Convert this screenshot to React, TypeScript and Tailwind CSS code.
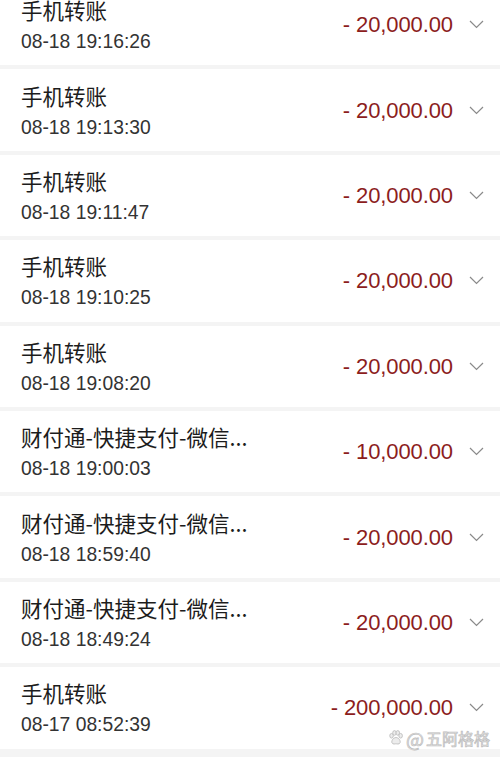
import React from "react";

const rows = [
  { t: "手机转账", d: "08-18 19:16:26", a: "- 20,000.00" },
  { t: "手机转账", d: "08-18 19:13:30", a: "- 20,000.00" },
  { t: "手机转账", d: "08-18 19:11:47", a: "- 20,000.00" },
  { t: "手机转账", d: "08-18 19:10:25", a: "- 20,000.00" },
  { t: "手机转账", d: "08-18 19:08:20", a: "- 20,000.00" },
  { t: "财付通-快捷支付-微信...", d: "08-18 19:00:03", a: "- 10,000.00" },
  { t: "财付通-快捷支付-微信...", d: "08-18 18:59:40", a: "- 20,000.00" },
  { t: "财付通-快捷支付-微信...", d: "08-18 18:49:24", a: "- 20,000.00" },
  { t: "手机转账", d: "08-17 08:52:39", a: "- 200,000.00" },
];

function Chevron() {
  return (
    <svg width="15" height="9" viewBox="0 0 15 9" className="shrink-0">
      <polyline points="1,1 7.5,7.5 14,1" fill="none" stroke="#8a8a8a" strokeWidth="1.2" />
    </svg>
  );
}

function Paw() {
  return (
    <svg width="16" height="16" viewBox="0 0 18 18" className="shrink-0">
      <g fill="#ececec" stroke="#bdbdbd" strokeWidth="1">
        <ellipse cx="4" cy="6.5" rx="2" ry="2.6" />
        <ellipse cx="7.3" cy="3.3" rx="2" ry="2.6" />
        <ellipse cx="11" cy="3.3" rx="2" ry="2.6" />
        <ellipse cx="14.2" cy="6.5" rx="2" ry="2.6" />
        <path d="M9 8.5 C6 8.5 3.5 12 4.5 14.5 C5.5 16.5 8 15.5 9 15.5 C10 15.5 12.5 16.5 13.5 14.5 C14.5 12 12 8.5 9 8.5 Z" />
      </g>
    </svg>
  );
}

export default function App() {
  return (
    <div
      className="relative w-[500px] h-[757px] overflow-hidden bg-[#f4f4f4]"
      style={{ fontFamily: '"Liberation Sans", "Noto Sans CJK SC", sans-serif' }}
    >
      <div className="flex flex-col gap-[4px] -mt-[16px]">
        {rows.map((r, i) => (
          <div key={i} className="h-[81.4px] bg-white flex items-center pl-[21px] pr-[16px] shrink-0">
            <div className="flex-1 flex flex-col">
              <div className="text-[21.5px] leading-[24px] text-[#1c1c1c] mt-[2px]" style={{ fontFamily: '"Noto Sans CJK SC", sans-serif' }}>
                {r.t}
              </div>
              <div className="text-[19.3px] leading-[22px] text-[#333] mt-[9px]">{r.d}</div>
            </div>
            <div className="text-[22px] text-[#8c1d1d] mr-[16px] tracking-[-0.1px]">{r.a}</div>
            <Chevron />
          </div>
        ))}
      </div>
      <div
        className="absolute right-[10px] bottom-[7px] flex items-center gap-[2px] text-[16px] text-[#ececec]"
        style={{ fontFamily: '"Noto Sans CJK SC", sans-serif', WebkitTextStroke: "0.7px #bdbdbd" }}
      >
        <Paw />
        <span className="text-[19px] leading-none">@</span>
        <span>五阿格格</span>
      </div>
    </div>
  );
}
